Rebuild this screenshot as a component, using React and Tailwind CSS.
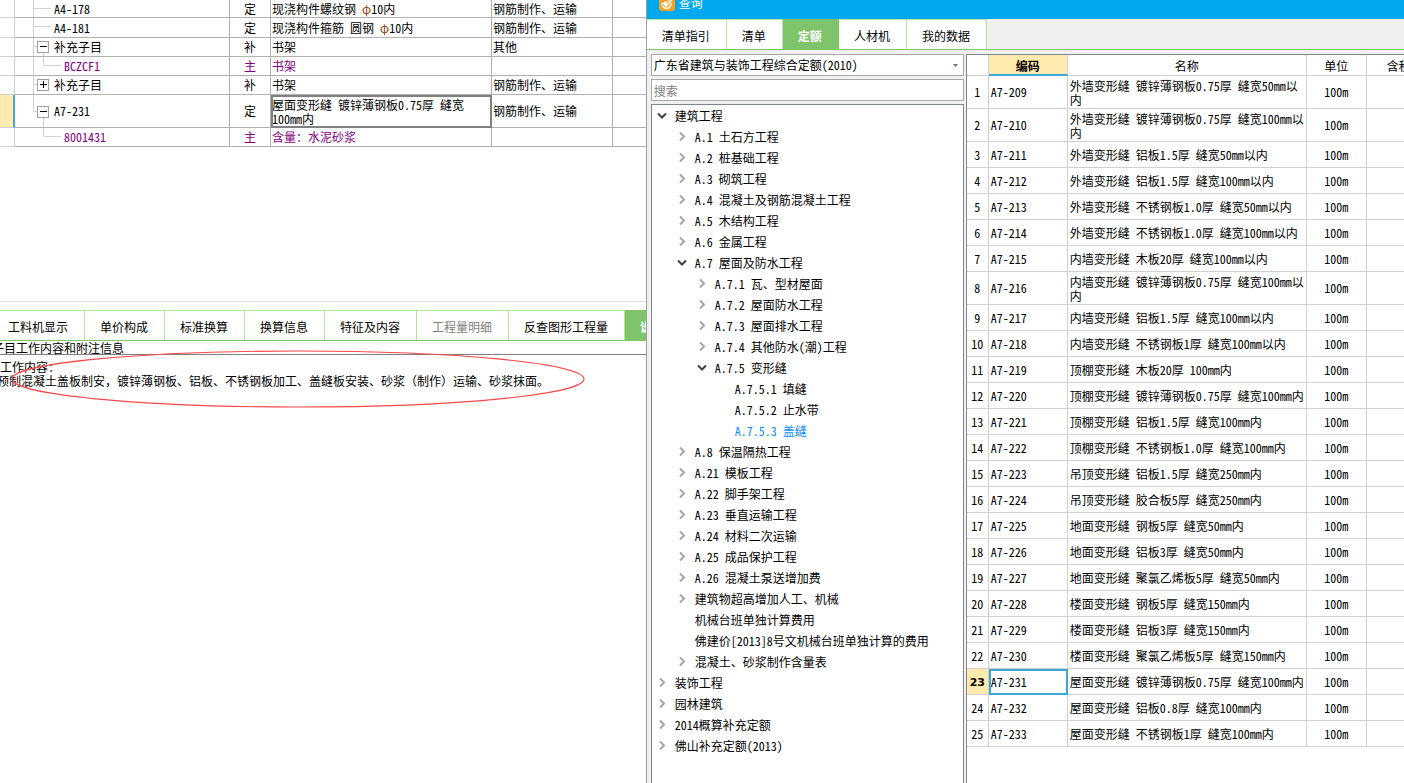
import { useState } from 'react';
import clsx from 'clsx';

const LINE = '#d0d0d0';

const estimateRows = [
  { code: 'A4-178', type: '定', name: '现浇构件螺纹钢 φ10内', work: '钢筋制作、运输', kind: 'leaf', h: 18 },
  { code: 'A4-181', type: '定', name: '现浇构件箍筋 圆钢 φ10内', work: '钢筋制作、运输', kind: 'leaf', h: 20 },
  { code: '补充子目', type: '补', name: '书架', work: '其他', kind: 'open', h: 19 },
  { code: 'BCZCF1', type: '主', name: '书架', work: '', kind: 'child', h: 19, accent: true },
  { code: '补充子目', type: '补', name: '书架', work: '钢筋制作、运输', kind: 'closed', h: 19 },
  { code: 'A7-231', type: '定', name: '屋面变形缝 镀锌薄钢板0.75厚 缝宽100mm内', work: '钢筋制作、运输', kind: 'open', h: 33, last: true, selected: true },
  { code: '8001431', type: '主', name: '含量：水泥砂浆', work: '', kind: 'child', h: 19, last: true, accent: true },
];

const detailTabs = ['工料机显示', '单价构成', '标准换算', '换算信息', '特征及内容', '工程量明细', '反查图形工程量', '说明信息'];

const queryTabs = ['清单指引', '清单', '定额', '人材机', '我的数据'];

// level, state, label
const tree = [
  [0, 'open', '建筑工程'],
  [1, 'closed', 'A.1 土石方工程'],
  [1, 'closed', 'A.2 桩基础工程'],
  [1, 'closed', 'A.3 砌筑工程'],
  [1, 'closed', 'A.4 混凝土及钢筋混凝土工程'],
  [1, 'closed', 'A.5 木结构工程'],
  [1, 'closed', 'A.6 金属工程'],
  [1, 'open', 'A.7 屋面及防水工程'],
  [2, 'closed', 'A.7.1 瓦、型材屋面'],
  [2, 'closed', 'A.7.2 屋面防水工程'],
  [2, 'closed', 'A.7.3 屋面排水工程'],
  [2, 'closed', 'A.7.4 其他防水(潮)工程'],
  [2, 'open', 'A.7.5 变形缝'],
  [3, 'leaf', 'A.7.5.1 填缝'],
  [3, 'leaf', 'A.7.5.2 止水带'],
  [3, 'leaf', 'A.7.5.3 盖缝'],
  [1, 'closed', 'A.8 保温隔热工程'],
  [1, 'closed', 'A.21 模板工程'],
  [1, 'closed', 'A.22 脚手架工程'],
  [1, 'closed', 'A.23 垂直运输工程'],
  [1, 'closed', 'A.24 材料二次运输'],
  [1, 'closed', 'A.25 成品保护工程'],
  [1, 'closed', 'A.26 混凝土泵送增加费'],
  [1, 'closed', '建筑物超高增加人工、机械'],
  [1, 'leaf', '机械台班单独计算费用'],
  [1, 'leaf', '佛建价[2013]8号文机械台班单独计算的费用'],
  [1, 'closed', '混凝土、砂浆制作含量表'],
  [0, 'closed', '装饰工程'],
  [0, 'closed', '园林建筑'],
  [0, 'closed', '2014概算补充定额'],
  [0, 'closed', '佛山补充定额(2013)'],
];

const quotas = [
  ['A7-209', '外墙变形缝 镀锌薄钢板0.75厚 缝宽50mm以内'],
  ['A7-210', '外墙变形缝 镀锌薄钢板0.75厚 缝宽100mm以内'],
  ['A7-211', '外墙变形缝 铝板1.5厚 缝宽50mm以内'],
  ['A7-212', '外墙变形缝 铝板1.5厚 缝宽100mm以内'],
  ['A7-213', '外墙变形缝 不锈钢板1.0厚 缝宽50mm以内'],
  ['A7-214', '外墙变形缝 不锈钢板1.0厚 缝宽100mm以内'],
  ['A7-215', '内墙变形缝 木板20厚 缝宽100mm以内'],
  ['A7-216', '内墙变形缝 镀锌薄钢板0.75厚 缝宽100mm以内'],
  ['A7-217', '内墙变形缝 铝板1.5厚 缝宽100mm以内'],
  ['A7-218', '内墙变形缝 不锈钢板1厚 缝宽100mm以内'],
  ['A7-219', '顶棚变形缝 木板20厚 100mm内'],
  ['A7-220', '顶棚变形缝 镀锌薄钢板0.75厚 缝宽100mm内'],
  ['A7-221', '顶棚变形缝 铝板1.5厚 缝宽100mm内'],
  ['A7-222', '顶棚变形缝 不锈钢板1.0厚 缝宽100mm内'],
  ['A7-223', '吊顶变形缝 铝板1.5厚 缝宽250mm内'],
  ['A7-224', '吊顶变形缝 胶合板5厚 缝宽250mm内'],
  ['A7-225', '地面变形缝 钢板5厚 缝宽50mm内'],
  ['A7-226', '地面变形缝 铝板3厚 缝宽50mm内'],
  ['A7-227', '地面变形缝 聚氯乙烯板5厚 缝宽50mm内'],
  ['A7-228', '楼面变形缝 钢板5厚 缝宽150mm内'],
  ['A7-229', '楼面变形缝 铝板3厚 缝宽150mm内'],
  ['A7-230', '楼面变形缝 聚氯乙烯板5厚 缝宽150mm内'],
  ['A7-231', '屋面变形缝 镀锌薄钢板0.75厚 缝宽100mm内'],
  ['A7-232', '屋面变形缝 铝板0.8厚 缝宽100mm内'],
  ['A7-233', '屋面变形缝 不锈钢板1厚 缝宽100mm内'],
];

// the diameter sign carries its own colour inside a name
function Mixed({ children }) {
  return children.split('φ').map((part, i) => (
    <span key={i}>
      {i > 0 && <span className="text-[#8a4510]">φ</span>}
      {part}
    </span>
  ));
}

function Guides({ kind, last, h }) {
  const mid = h > 25 ? 16 : 8;
  const y = mid + 0.5;
  const width = kind === 'child' ? 49 : 39;
  return (
    <svg width={width} height={h - 1} className="block shrink-0" fill="none" stroke={LINE} aria-hidden="true">
      {kind === 'child' ? (
        <>
          {!last && <path d={`M18.5 0V${h}`} />}
          <path d={`M28.5 0V${y}H46`} />
        </>
      ) : (
        <>
          <path d={`M18.5 0V${last ? y : h}M18.5 ${y}H${kind === 'leaf' ? 36 : 22}`} />
          {kind === 'open' && <path d={`M28.5 ${y + 6}V${h}`} />}
        </>
      )}
      {(kind === 'open' || kind === 'closed') && (
        <>
          <rect x="22.5" y={y - 5} width="11" height="11" fill="#fff" stroke="#a0a0a0" />
          <path d={`M25 ${y}H32`} stroke="#000" />
          {kind === 'closed' && <path d={`M28.5 ${y - 3.5}V${y + 3.5}`} stroke="#000" />}
        </>
      )}
    </svg>
  );
}

function EstimateTable() {
  const cell = 'border-r border-b border-[#b0b0b0] p-0';
  return (
    <table className="w-full table-fixed border-separate border-spacing-0 leading-[14px]">
      <colgroup>
        <col className="w-[15px]" />
        <col className="w-[215px]" />
        <col className="w-[41px]" />
        <col className="w-[221px]" />
        <col className="w-[121px]" />
        <col />
      </colgroup>
      <tbody>
        {estimateRows.map((row, i) => (
          <tr key={i} className={clsx(row.accent && 'text-[#800080]')} style={{ height: row.h }}>
            <td
              className={clsx(
                'border-b border-b-[#d0d0d0] p-0',
                row.selected ? 'border-r-2 border-r-[#3ba7d4] bg-[#ffebb0]' : 'border-r border-r-[#d0d0d0]',
              )}
            />
            <td className={cell}>
              <div className="flex items-center">
                <Guides kind={row.kind} last={row.last} h={row.h} />
                <span>{row.code}</span>
              </div>
            </td>
            <td className={clsx(cell, 'text-center')}>{row.type}</td>
            <td className={clsx(cell, 'pl-px', row.selected && 'pt-px outline-2 -outline-offset-2 outline-[#808080]')}>
              <Mixed>{row.name}</Mixed>
            </td>
            <td className={clsx(cell, 'pl-px')}>{row.work}</td>
            <td className="border-b border-[#b0b0b0] p-0" />
          </tr>
        ))}
      </tbody>
    </table>
  );
}

function Tabs({ items, active, disabled, onChange, className }) {
  return (
    <div role="tablist" className={clsx('flex h-[31px] shrink-0 border-b border-[#7fc46b]', className)}>
      {items.map((label) => (
        <button
          key={label}
          type="button"
          role="tab"
          aria-selected={label === active}
          disabled={label === disabled}
          onClick={() => onChange(label)}
          className={clsx(
            'shrink-0 border-t border-r pt-0.5 pr-4 pl-[15px] whitespace-nowrap',
            label === active ? 'border-[#7fc46b] bg-[#7fc46b] font-bold text-white' : 'border-[#b3e69b] bg-white',
            label === disabled && 'text-[#808080]',
          )}
        >
          {label}
        </button>
      ))}
    </div>
  );
}

function WorkContent() {
  const [tab, setTab] = useState('说明信息');
  return (
    <section className="flex flex-1 flex-col border-t border-[#e0e0e0]">
      <div className="mt-2 overflow-hidden">
        <Tabs items={detailTabs} active={tab} disabled="工程量明细" onChange={setTab} className="-ml-[7px]" />
      </div>
      <h2 className="-ml-2 border-b border-[#808080] leading-[13px] whitespace-nowrap">子目工作内容和附注信息</h2>
      <div className="relative pt-[5px] leading-[14px] whitespace-nowrap">
        <p>工作内容：</p>
        <p className="-ml-[3px]">预制混凝土盖板制安，镀锌薄钢板、铝板、不锈钢板加工、盖缝板安装、砂浆（制作）运输、砂浆抹面。</p>
        <svg className="absolute -top-[5px] left-[10px]" width="576" height="58" fill="none" aria-hidden="true">
          <ellipse cx="288" cy="29" rx="286" ry="28" stroke="#f84848" strokeWidth="1.2" />
        </svg>
      </div>
    </section>
  );
}

function TreeArrow({ open }) {
  return (
    <svg width="12" height="12" viewBox="0 0 12 12" fill="none" strokeWidth="2" aria-hidden="true">
      {open ? <path d="M2 3.5L6 7.5L10 3.5" stroke="#404040" /> : <path d="M4 1.5L8 5.5L4 9.5" stroke="#a6a6a6" />}
    </svg>
  );
}

function QuotaTree() {
  const [current, setCurrent] = useState('A.7.5.3 盖缝');
  return (
    <ul className="flex-1 border border-b-0 border-[#7f868e] bg-white">
      {tree.map(([level, state, label]) => (
        <li key={label} className="flex h-[21px] items-center" style={{ paddingLeft: 4 + level * 20 }}>
          <span className="flex w-[19px] shrink-0">
            {state !== 'leaf' && (
              <button type="button" aria-label={label} aria-expanded={state === 'open'}>
                <TreeArrow open={state === 'open'} />
              </button>
            )}
          </span>
          <button
            type="button"
            onClick={() => setCurrent(label)}
            className={clsx('whitespace-nowrap', label === current && 'text-[#0a8cff]')}
          >
            {label}
          </button>
        </li>
      ))}
    </ul>
  );
}

function QuotaTable() {
  const cell = 'border-r border-b border-[#d0d0d0] p-0 font-normal';
  return (
    <div className="min-w-0 flex-1 overflow-hidden border-t border-l border-[#7f868e] bg-white">
      <table className="w-full table-fixed border-separate border-spacing-0 leading-[14px]">
        <colgroup>
          <col className="w-[22px]" />
          <col className="w-[79px]" />
          <col className="w-[239px]" />
          <col className="w-[60px]" />
          <col />
        </colgroup>
        <thead>
          <tr className="h-[21px]">
            <th className={cell} aria-label="序号" />
            <th className="border-r border-b-2 border-r-[#d0d0d0] border-b-[#3ba7d4] bg-[#ffebb0] p-0 pt-0.5 font-bold">编码</th>
            <th className={clsx(cell, 'pt-0.5')}>名称</th>
            <th className={clsx(cell, 'pt-0.5')}>单位</th>
            <th className="overflow-hidden border-b border-[#d0d0d0] p-0 pt-0.5 pl-5 text-left font-normal whitespace-nowrap">含税价</th>
          </tr>
        </thead>
        <tbody>
          {quotas.map(([code, name], i) => {
            const selected = code === 'A7-231';
            const wraps = name.includes('0.75厚') && name.endsWith('以内');
            return (
              <tr key={code} className={wraps ? 'h-[33px]' : 'h-[26px]'}>
                <td className={clsx(cell, 'text-center', selected && 'bg-[#ffebb0]')}>
                  {selected ? <b className="font-['DejaVu_Sans',sans-serif] text-[11px]">{i + 1}</b> : i + 1}
                </td>
                <td className={clsx(cell, 'pl-0.5', selected && 'outline-2 -outline-offset-2 outline-[#3ba7d4]')}>
                  {code}
                </td>
                <td className={clsx(cell, 'pl-0.5', wraps && 'pt-px')}>{name}</td>
                <td className={clsx(cell, 'text-center')}>100m</td>
                <td className="border-b border-[#d0d0d0] p-0" />
              </tr>
            );
          })}
        </tbody>
      </table>
    </div>
  );
}

function QueryWindow() {
  const [tab, setTab] = useState('定额');
  return (
    <section className="flex min-w-0 flex-1 flex-col border-l border-[#a0a0a0] bg-[#f0f0f0]">
      <header className="flex h-[19px] shrink-0 items-end gap-1 overflow-hidden bg-[#00a8f0] pl-3 text-white">
        <svg width="16" height="16" viewBox="0 0 16 16" fill="none" className="-translate-y-2 shrink-0" aria-hidden="true">
          <rect width="16" height="16" rx="3" fill="#f7a021" />
          <path d="M3 8C3 13 6 14 9 13C11 12 12 10 12.5 8" stroke="#fff" strokeWidth="1.5" />
          <path d="M5 7L7 10L13 3" stroke="#fff" strokeWidth="3" />
          <path d="M7.5 8.5L12 3.5" stroke="#f7a021" strokeWidth="1" />
        </svg>
        <h1 className="leading-[32px]">查询</h1>
      </header>
      <Tabs items={queryTabs} active={tab} onChange={setTab} />
      <div className="flex flex-1 gap-0.5 pt-1 pl-1">
        <aside className="flex w-[313px] shrink-0 flex-col gap-[3px]">
          <div className="relative">
            <select
              aria-label="定额库"
              className="block h-[22px] w-full appearance-none border border-[#a8a8a8] bg-white pl-0.5 outline-none"
            >
              <option>广东省建筑与装饰工程综合定额(2010)</option>
            </select>
            <svg width="5" height="3" className="pointer-events-none absolute top-[10px] right-[6px]" aria-hidden="true">
              <path d="M0 0H5L2.5 3Z" fill="#6b7480" />
            </svg>
          </div>
          <input
            type="text"
            aria-label="搜索"
            placeholder="搜索"
            className="h-[22px] w-full border border-[#a8a8a8] bg-white pl-0.5 outline-none placeholder:text-[#808080]"
          />
          <QuotaTree />
        </aside>
        <QuotaTable />
      </div>
    </section>
  );
}

export default function App() {
  return (
    <main className="flex h-screen overflow-hidden bg-white font-['Noto_Sans_Mono_CJK_SC','Noto_Sans_CJK_SC',sans-serif] text-[12px] text-black">
      <div className="flex w-[46%] shrink-0 flex-col overflow-hidden">
        <div className="h-[301px] shrink-0">
          <EstimateTable />
        </div>
        <WorkContent />
      </div>
      <QueryWindow />
    </main>
  );
}
